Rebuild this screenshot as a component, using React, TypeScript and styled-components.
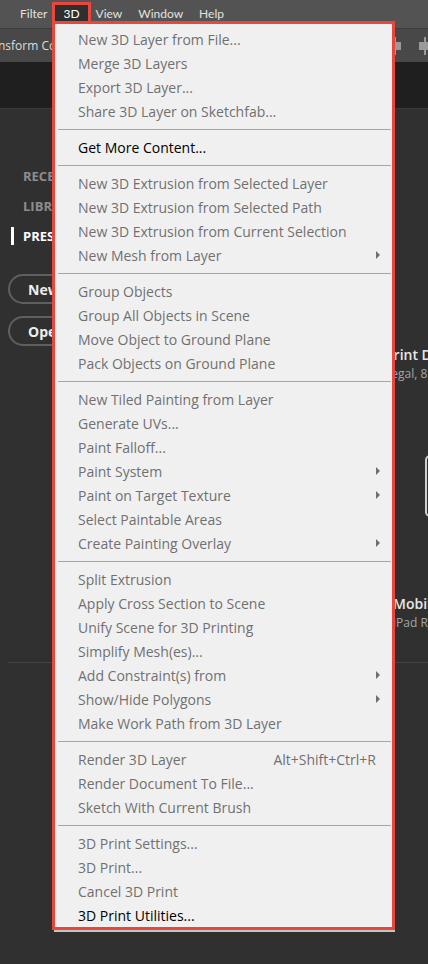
import styled, { createGlobalStyle } from 'styled-components';

const GlobalStyle = createGlobalStyle`
  html, body {
    margin: 0;
    padding: 0;
    background: #303030;
  }
  body {
    font-family: 'Open Sans', 'Noto Sans', Arial, sans-serif;
  }
`;

const Screen = styled.div`
  position: relative;
  width: 428px;
  height: 964px;
  overflow: hidden;
  background: #303030;
`;

const MenuBar = styled.div`
  display: flex;
  align-items: center;
  height: 28px;
  background: #535353;
  padding-left: 12px;
  font-family: 'Lato', 'Open Sans', sans-serif;
  font-size: 12px;
  color: #e2e2e2;
`;

const MenuTitle = styled.div<{ active?: boolean }>`
  padding: 0 ${(p) => (p.active ? '9px' : '8px')};
  height: 19px;
  line-height: 19px;
  margin: -2px ${(p) => (p.active ? '-1px' : '0')} 0 ${(p) => (p.active ? '-1px' : '0')};
  background: ${(p) => (p.active ? '#2f2f2f' : 'transparent')};
  color: ${(p) => (p.active ? '#ffffff' : '#e2e2e2')};
  outline: ${(p) => (p.active ? '3px solid #e8473d' : 'none')};
  outline-offset: -1px;
`;

const OptionsBar = styled.div`
  display: flex;
  align-items: center;
  justify-content: space-between;
  height: 33px;
  background: #484848;
  border-top: 1px solid #3c3c3c;
  font-size: 12px;
  color: #dedede;
`;

const OptionLabel = styled.span`
  margin-left: -2px;
`;

const AlignIcons = styled.div`
  display: flex;
  gap: 16px;
  align-items: center;
  margin-right: -4px;
`;

const TabStrip = styled.div`
  height: 46px;
  background: #1f1f1f;
  border-bottom: 1px solid #3a3a3a;
`;

const Workspace = styled.div`
  display: flex;
  height: 855px;
`;

const Sidebar = styled.div`
  width: 100px;
  flex-shrink: 0;
  padding-top: 52px;
  display: flex;
  flex-direction: column;
`;

const NavItem = styled.div<{ active?: boolean }>`
  display: flex;
  align-items: center;
  height: 30px;
  padding-left: ${(p) => (p.active ? '11px' : '23px')};
  font-size: 13px;
  font-weight: 700;
  color: ${(p) => (p.active ? '#ffffff' : '#8d8d8d')};
  white-space: nowrap;
  &::before {
    content: '';
    display: ${(p) => (p.active ? 'block' : 'none')};
    width: 3px;
    height: 18px;
    background: #ffffff;
    margin-right: 9px;
  }
`;

const PillButton = styled.div`
  margin: 0 0 12px 8px;
  height: 26px;
  width: 120px;
  border: 2px solid #5f5f5f;
  border-radius: 15px;
  display: flex;
  align-items: center;
  padding-left: 18px;
  font-size: 14px;
  font-weight: 700;
  color: #eeeeee;
  box-sizing: content-box;
`;

const ButtonStack = styled.div`
  margin-top: 23px;
`;

const Content = styled.div`
  flex: 1;
  min-width: 0;
  display: flex;
  flex-direction: column;
`;

const Preset = styled.div<{ top: number; indent: number }>`
  margin-top: ${(p) => p.top}px;
  padding-left: ${(p) => p.indent}px;
  white-space: nowrap;
`;

const PresetTitle = styled.div`
  font-size: 14px;
  font-weight: 600;
  color: #e8e8e8;
  line-height: 20px;
`;

const PresetSub = styled.div`
  font-size: 12px;
  color: #a5a5a5;
  line-height: 18px;
`;

const Card = styled.div`
  margin: 72px 0 0 325px;
  width: 60px;
  height: 58px;
  flex-shrink: 0;
  border: 2px solid #cfcfcf;
  border-radius: 5px;
`;

const Divider = styled.div`
  margin: 30px 0 0 -92px;
  height: 1px;
  background: #444444;
`;

/* dropdown */

const Dropdown = styled.div`
  position: absolute;
  left: 52px;
  top: 21px;
  width: 337px;
  background: #f0f0f0;
  border: 3px solid #e8473d;
  padding: 3px 0 0;
  font-family: 'Open Sans', 'Noto Sans', Arial, sans-serif;
  box-shadow: 1px 3px 0 -1px #c4c4c4;
`;

const Item = styled.div<{ enabled?: boolean }>`
  display: flex;
  align-items: center;
  height: 24px;
  padding: 0 14px 0 23px;
  font-size: 14px;
  color: ${(p) => (p.enabled ? '#000000' : '#707070')};
  white-space: nowrap;
`;

const ItemLabel = styled.span`
  flex: 1;
`;

const Shortcut = styled.span`
  color: #707070;
  padding-right: 2px;
`;

const Arrow = styled.span`
  width: 0;
  height: 0;
  border-top: 4px solid transparent;
  border-bottom: 4px solid transparent;
  border-left: 4px solid #6e6e6e;
  margin-right: -2px;
`;

const Separator = styled.div`
  height: 12px;
  display: flex;
  align-items: center;
  padding: 0 1px 0 3px;
  &::after {
    content: '';
    flex: 1;
    height: 1px;
    background: #a6a6a6;
  }
`;

type Entry = { label: string; enabled?: boolean; sub?: boolean; shortcut?: string } | 'sep';

const entries: Entry[] = [
  { label: 'New 3D Layer from File...' },
  { label: 'Merge 3D Layers' },
  { label: 'Export 3D Layer...' },
  { label: 'Share 3D Layer on Sketchfab...' },
  'sep',
  { label: 'Get More Content...', enabled: true },
  'sep',
  { label: 'New 3D Extrusion from Selected Layer' },
  { label: 'New 3D Extrusion from Selected Path' },
  { label: 'New 3D Extrusion from Current Selection' },
  { label: 'New Mesh from Layer', sub: true },
  'sep',
  { label: 'Group Objects' },
  { label: 'Group All Objects in Scene' },
  { label: 'Move Object to Ground Plane' },
  { label: 'Pack Objects on Ground Plane' },
  'sep',
  { label: 'New Tiled Painting from Layer' },
  { label: 'Generate UVs...' },
  { label: 'Paint Falloff...' },
  { label: 'Paint System', sub: true },
  { label: 'Paint on Target Texture', sub: true },
  { label: 'Select Paintable Areas' },
  { label: 'Create Painting Overlay', sub: true },
  'sep',
  { label: 'Split Extrusion' },
  { label: 'Apply Cross Section to Scene' },
  { label: 'Unify Scene for 3D Printing' },
  { label: 'Simplify Mesh(es)...' },
  { label: 'Add Constraint(s) from', sub: true },
  { label: 'Show/Hide Polygons', sub: true },
  { label: 'Make Work Path from 3D Layer' },
  'sep',
  { label: 'Render 3D Layer', shortcut: 'Alt+Shift+Ctrl+R' },
  { label: 'Render Document To File...' },
  { label: 'Sketch With Current Brush' },
  'sep',
  { label: '3D Print Settings...' },
  { label: '3D Print...' },
  { label: 'Cancel 3D Print' },
  { label: '3D Print Utilities...', enabled: true },
];

const AlignIcon = () => (
  <svg width="14" height="18" viewBox="0 0 14 18">
    <rect x="6" y="0" width="2" height="18" fill="#9a9a9a" />
    <rect x="1" y="5" width="12" height="8" fill="#9a9a9a" />
  </svg>
);

export default function App() {
  return (
    <Screen>
      <GlobalStyle />
      <MenuBar>
        <MenuTitle>Filter</MenuTitle>
        <MenuTitle active>3D</MenuTitle>
        <MenuTitle>View</MenuTitle>
        <MenuTitle>Window</MenuTitle>
        <MenuTitle>Help</MenuTitle>
      </MenuBar>
      <OptionsBar>
        <OptionLabel>nsform Controls</OptionLabel>
        <AlignIcons>
          <AlignIcon />
          <AlignIcon />
        </AlignIcons>
      </OptionsBar>
      <TabStrip />
      <Workspace>
        <Sidebar>
          <NavItem>RECENT</NavItem>
          <NavItem>LIBRARIES</NavItem>
          <NavItem active>PRESETS</NavItem>
          <ButtonStack>
            <PillButton>New</PillButton>
            <PillButton>Open</PillButton>
          </ButtonStack>
        </Sidebar>
        <Content>
          <Preset top={236} indent={285}>
            <PresetTitle>Print Document</PresetTitle>
            <PresetSub>Legal, 8.5 x 14 in</PresetSub>
          </Preset>
          <Card />
          <Preset top={77} indent={293}>
            <PresetTitle>Mobile</PresetTitle>
            <PresetSub>iPad Retina</PresetSub>
          </Preset>
          <Divider />
        </Content>
      </Workspace>

      <Dropdown>
        {entries.map((e, i) =>
          e === 'sep' ? (
            <Separator key={i} />
          ) : (
            <Item key={i} enabled={e.enabled}>
              <ItemLabel>{e.label}</ItemLabel>
              {e.shortcut && <Shortcut>{e.shortcut}</Shortcut>}
              {e.sub && <Arrow />}
            </Item>
          ),
        )}
      </Dropdown>
    </Screen>
  );
}
